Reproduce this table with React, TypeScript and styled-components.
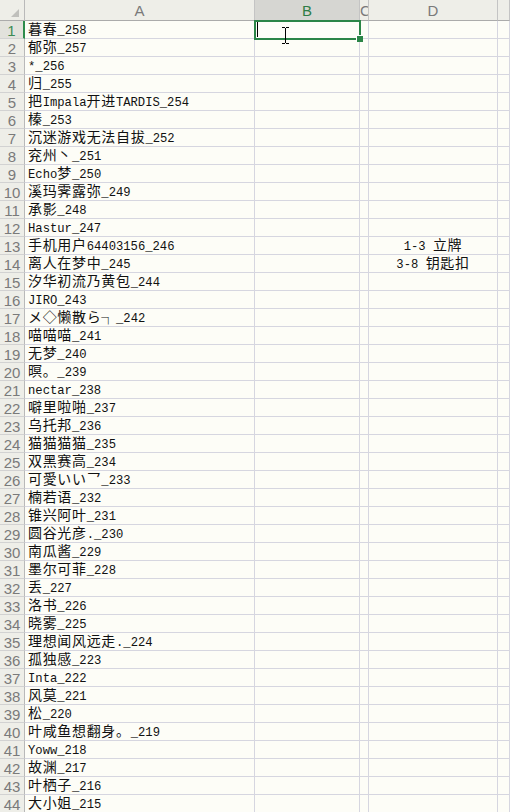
import React from "react";
import styled, { createGlobalStyle } from "styled-components";

const GlobalStyle = createGlobalStyle`
  html, body { margin: 0; padding: 0; background: #fdfdf7; overflow: hidden; }
  #root { width: 510px; height: 812px; overflow: hidden; }
`;

const names: string[] = [
  "暮春_258",
  "郁弥_257",
  "*_256",
  "归_255",
  "把Impala开进TARDIS_254",
  "榛_253",
  "沉迷游戏无法自拔_252",
  "兖州丶_251",
  "Echo梦_250",
  "溪玛霁露弥_249",
  "承影_248",
  "Hastur_247",
  "手机用户64403156_246",
  "离人在梦中_245",
  "汐华初流乃黄包_244",
  "JIRO_243",
  "メ◇懒散ら┐_242",
  "喵喵喵_241",
  "无梦_240",
  "暝。_239",
  "nectar_238",
  "噼里啦啪_237",
  "乌托邦_236",
  "猫猫猫猫_235",
  "双黑赛高_234",
  "可愛いい乛_233",
  "楠若语_232",
  "锥兴阿叶_231",
  "圆谷光彦._230",
  "南瓜酱_229",
  "墨尔可菲_228",
  "丢_227",
  "洛书_226",
  "晓雾_225",
  "理想闻风远走._224",
  "孤独感_223",
  "Inta_222",
  "风莫_221",
  "松_220",
  "叶咸鱼想翻身。_219",
  "Yoww_218",
  "故渊_217",
  "叶栖子_216",
  "大小姐_215",
  "",
];

const notes: Record<number, string> = {
  13: "1-3 立牌",
  14: "3-8 钥匙扣",
};

const columns = ["A", "B", "C", "D", "E"];

const Sheet = styled.div`
  display: grid;
  grid-template-columns: 25px 230px 105px 9px 129px 1fr;
  grid-template-rows: 21px;
  grid-auto-rows: 18px;
  width: 510px;
`;

const Corner = styled.div`
  box-sizing: border-box;
  background: #eeeee8;
  border-right: 1px solid #b9b9b9;
  border-bottom: 1px solid #ababab;
  display: flex;
  align-items: flex-end;
  justify-content: flex-end;
  padding: 0 5px 3px 0;
`;

const CornerMark = styled.div`
  width: 0;
  height: 0;
  border-left: 8px solid transparent;
  border-bottom: 8px solid #c0c0bc;
`;

const ColHeader = styled.div<{ $active?: boolean; $narrow?: boolean }>`
  box-sizing: border-box;
  background: ${(p) => (p.$active ? "#d6d6d2" : "#eeeee8")};
  border-right: 1px solid #c4c4c4;
  border-bottom: 1px solid #ababab;
  display: flex;
  align-items: center;
  justify-content: ${(p) => (p.$narrow ? "flex-start" : "center")};
  overflow: hidden;
  padding-top: 1px;
  font-family: "Liberation Sans", Arial, sans-serif;
  font-size: 15px;
  color: ${(p) => (p.$active ? "#2e7d46" : "#7a7a7a")};
`;

const RowHeader = styled.div<{ $active?: boolean }>`
  box-sizing: border-box;
  background: ${(p) => (p.$active ? "#e2e2dc" : "#eeeee8")};
  border-right: ${(p) => (p.$active ? "2px solid #2e8b4c" : "1px solid #b9b9b9")};
  border-bottom: 1px solid #d2d2d2;
  display: flex;
  align-items: center;
  justify-content: center;
  font-family: "Liberation Sans", Arial, sans-serif;
  font-size: 15px;
  color: ${(p) => (p.$active ? "#3d8a55" : "#7a7a7a")};
  padding-top: 1px;
`;

const Cell = styled.div<{ $align?: "left" | "center" }>`
  position: relative;
  box-sizing: border-box;
  border-right: 1px solid #d6d6e0;
  border-bottom: 1px solid #d6d6e0;
  background: #fdfdf7;
  display: flex;
  align-items: center;
  justify-content: ${(p) => (p.$align === "center" ? "center" : "flex-start")};
  padding-left: ${(p) => (p.$align === "center" ? "0" : "3px")};
  padding-top: 1px;
  overflow: visible;
  color: #111;
`;

const Text = styled.span`
  white-space: pre;
  line-height: 17px;
`;

const Latin = styled.span`
  font-family: "Liberation Mono", "Courier New", monospace;
  font-size: 12.2px;
`;

const Han = styled.span`
  font-family: "Noto Sans CJK SC", "Noto Sans CJK JP", sans-serif;
  font-size: 14px;
  letter-spacing: 0.67px;
`;

const Selection = styled.div`
  position: absolute;
  z-index: 2;
  left: -1px;
  top: -1px;
  width: 107px;
  height: 20px;
  box-sizing: border-box;
  border: 2px solid #2b8547;
  pointer-events: none;
`;

const FillHandle = styled.div`
  position: absolute;
  right: -4px;
  bottom: -4px;
  width: 6px;
  height: 6px;
  background: #2b8547;
  border-top: 1px solid #fff;
  border-left: 1px solid #fff;
`;

const Caret = styled.div`
  position: absolute;
  left: 2px;
  top: 1px;
  width: 1px;
  height: 15px;
  background: #000;
`;

const IBeam = styled.svg`
  position: absolute;
  z-index: 3;
  left: 26px;
  top: 6px;
`;

function MixedText({ text }: { text: string }) {
  const runs = text.match(/[\u0000-\u00ff]+|[^\u0000-\u00ff]+/g) || [];
  return (
    <Text>
      {runs.map((r, i) =>
        /^[\u0000-\u00ff]+$/.test(r) ? <Latin key={i}>{r}</Latin> : <Han key={i}>{r}</Han>
      )}
    </Text>
  );
}

export default function App() {
  return (
    <>
      <GlobalStyle />
      <Sheet>
        <Corner>
          <CornerMark />
        </Corner>
        {columns.map((c) => (
          <ColHeader key={c} $active={c === "B"} $narrow={c === "C"}>
            {c === "E" ? "" : c}
          </ColHeader>
        ))}
        {names.map((name, idx) => {
          const row = idx + 1;
          return (
            <React.Fragment key={row}>
              <RowHeader $active={row === 1}>{row}</RowHeader>
              <Cell>
                <MixedText text={name} />
              </Cell>
              <Cell>
                {row === 1 && (
                  <>
                    <Caret />
                    <IBeam width="9" height="17" viewBox="0 0 9 17">
                      <path d="M1 0.5h3M5 0.5h3M4.5 1v15M1 16.5h3M5 16.5h3" stroke="#000" strokeWidth="1" fill="none" />
                    </IBeam>
                    <Selection>
                      <FillHandle />
                    </Selection>
                  </>
                )}
              </Cell>
              <Cell />
              <Cell $align="center">{notes[row] ? <MixedText text={notes[row]} /> : null}</Cell>
              <Cell />
            </React.Fragment>
          );
        })}
      </Sheet>
    </>
  );
}
